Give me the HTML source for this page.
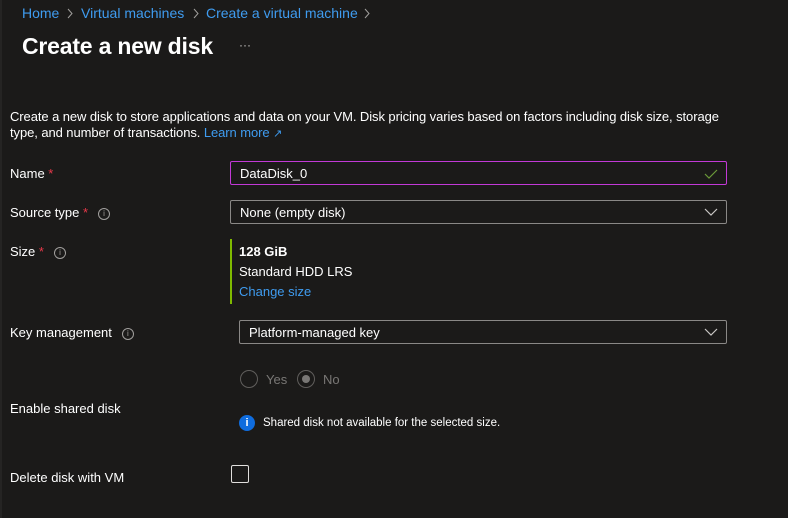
<!DOCTYPE html>
<html><head><meta charset="utf-8"><style>
html,body{margin:0;padding:0;}
body{width:788px;height:518px;background:#1b1a19;color:#fff;font-family:"Liberation Sans",sans-serif;font-size:13px;position:relative;overflow:hidden;}
.a{position:absolute;white-space:nowrap;}
.blue{color:#3f9cf0;}
.bc{font-size:14px;top:5px;}
.req{color:#e8394a;}
.info{display:inline-block;width:10px;height:10px;border:1px solid #a19f9d;border-radius:50%;font-size:8px;line-height:10px;text-align:center;color:#a19f9d;vertical-align:1px;margin-left:10px;}
.box{position:absolute;box-sizing:border-box;border:1px solid #8a8886;border-radius:2px;height:24px;}
.box span{position:absolute;left:9px;top:4px;}
.chev{position:absolute;right:8px;top:6px;}
.sep{position:absolute;top:8px;}
</style></head><body>
<div class="a" style="left:0;top:0;width:2px;height:518px;background:#252423"></div>
<div class="a bc blue" style="left:22px">Home</div>
<svg class="sep" style="left:67px" width="6" height="11" viewBox="0 0 6 11"><path d="M1 1l4 4.5L1 10" stroke="#a19f9d" fill="none"/></svg>
<div class="a bc blue" style="left:81px">Virtual machines</div>
<svg class="sep" style="left:193px" width="6" height="11" viewBox="0 0 6 11"><path d="M1 1l4 4.5L1 10" stroke="#a19f9d" fill="none"/></svg>
<div class="a bc blue" style="left:206px">Create a virtual machine</div>
<svg class="sep" style="left:364px" width="6" height="11" viewBox="0 0 6 11"><path d="M1 1l4 4.5L1 10" stroke="#a19f9d" fill="none"/></svg>
<div class="a" style="left:22px;top:33px;font-size:23px;font-weight:bold;letter-spacing:-0.2px">Create a new disk</div>
<div class="a" style="left:239px;top:38px;color:#c8c6c4;font-size:12px">···</div>
<div class="a" style="left:10px;top:109px;line-height:16px;letter-spacing:-0.08px">Create a new disk to store applications and data on your VM. Disk pricing varies based on factors including disk size, storage<br>type, and number of transactions. <span class="blue">Learn more</span> <span style="color:#3f9cf0;font-size:11px">&#x2197;</span></div>

<div class="a" style="left:10px;top:166px">Name <span class="req">*</span></div>
<div class="box" style="left:230px;top:161px;width:497px;border-color:#c239d6"><span>DataDisk_0</span>
<svg class="chev" width="14" height="12" viewBox="0 0 14 12"><path d="M1 6l4 4 8-8" stroke="#6b9a3a" stroke-width="1.2" fill="none"/></svg></div>

<div class="a" style="left:10px;top:205px">Source type <span class="req">*</span><span class="info">i</span></div>
<div class="box" style="left:230px;top:200px;width:497px"><span>None (empty disk)</span>
<svg class="chev" width="14" height="10" viewBox="0 0 14 10"><path d="M1 2l6 6 6-6" stroke="#c8c6c4" stroke-width="1.2" fill="none"/></svg></div>

<div class="a" style="left:10px;top:244px">Size <span class="req">*</span><span class="info">i</span></div>
<div class="a" style="left:230px;top:239px;width:2px;height:65px;background:#7fba00"></div>
<div class="a" style="left:239px;top:244px;font-weight:bold">128 GiB</div>
<div class="a" style="left:239px;top:264px">Standard HDD LRS</div>
<div class="a blue" style="left:239px;top:284px">Change size</div>

<div class="a" style="left:10px;top:325px">Key management<span class="info">i</span></div>
<div class="box" style="left:239px;top:320px;width:488px"><span>Platform-managed key</span>
<svg class="chev" width="14" height="10" viewBox="0 0 14 10"><path d="M1 2l6 6 6-6" stroke="#c8c6c4" stroke-width="1.2" fill="none"/></svg></div>

<div class="a" style="left:240px;top:370px;width:18px;height:18px;box-sizing:border-box;border:1px solid #605e5c;border-radius:50%"></div>
<div class="a" style="left:266px;top:372px;color:#797775">Yes</div>
<div class="a" style="left:297px;top:370px;width:18px;height:18px;box-sizing:border-box;border:1px solid #605e5c;border-radius:50%"><div style="position:absolute;left:4px;top:4px;width:8px;height:8px;border-radius:50%;background:#797775"></div></div>
<div class="a" style="left:323px;top:372px;color:#797775">No</div>

<div class="a" style="left:10px;top:401px">Enable shared disk</div>
<div class="a" style="left:239px;top:415px;width:16px;height:16px;border-radius:50%;background:#0f6cde;color:#fff;font-weight:bold;font-size:11px;text-align:center;line-height:16px">i</div>
<div class="a" style="left:263px;top:417px;font-size:11.5px">Shared disk not available for the selected size.</div>

<div class="a" style="left:10px;top:470px">Delete disk with VM</div>
<div class="a" style="left:231px;top:465px;width:18px;height:18px;box-sizing:border-box;border:1px solid #e1dfdd;border-radius:2px"></div>
</body></html>
